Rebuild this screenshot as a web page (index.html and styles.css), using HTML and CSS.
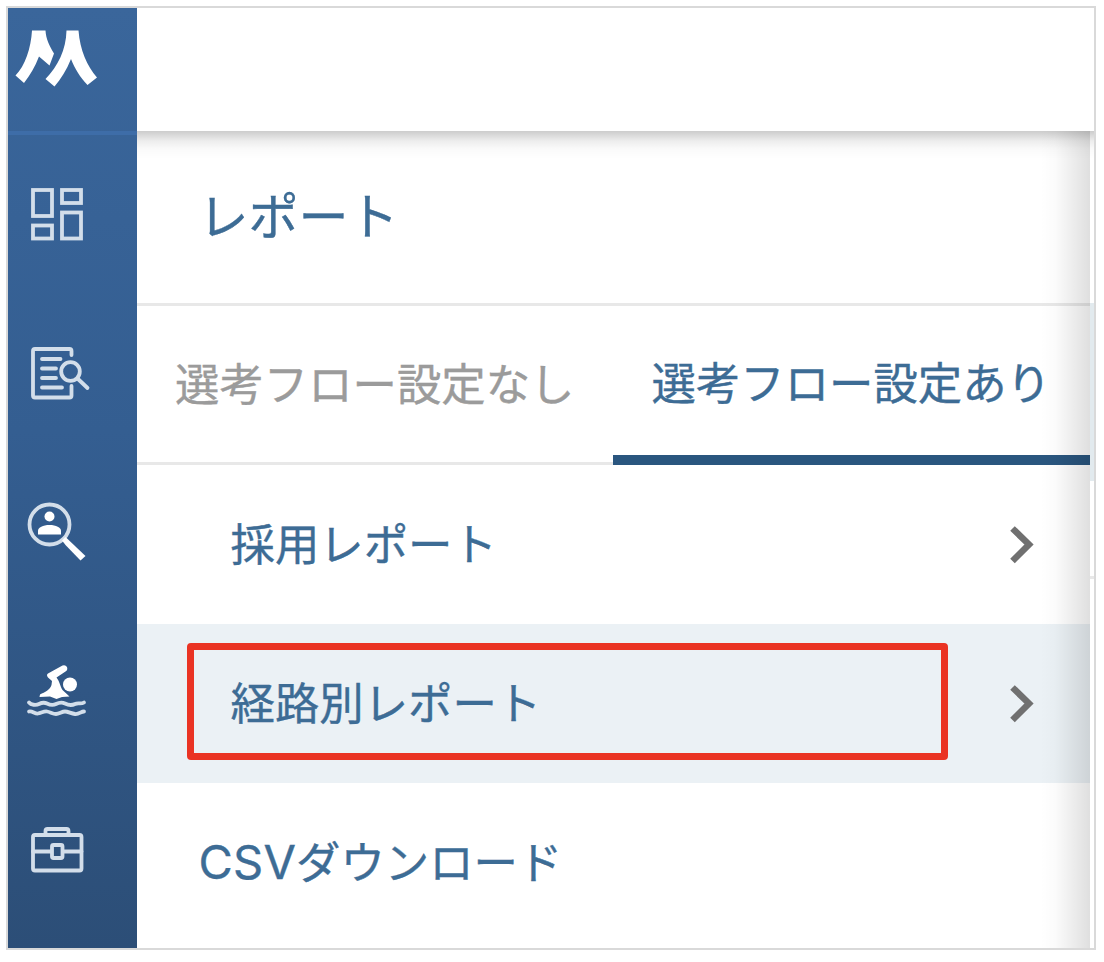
FILE: index.html
```html
<!DOCTYPE html>
<html lang="ja">
<head>
  <meta charset="UTF-8">
  <meta name="viewport" content="width=device-width, initial-scale=1.0">
  <title>レポート</title>
  <link rel="stylesheet" href="styles.css">
</head>
<body>
  <div class="app">
    <nav class="sidebar">
      <a class="logo" href="#">
        <svg width="128" height="124" viewBox="8 8 128 124">
          <path d="M32 30.500H45.500C46 39 49 45 54 53.500L49.500 65.500L39 56.500C35 67 30 75 24 83L15.500 75.500C25 66 31 48 32 30.500z"/>
          <path d="M66.500 30.500H78.500C80 50 87 66 97 77.500L87.500 85C80 77 75 69 71 59C66.500 70 61 79 54.500 86.500L45.500 79C58 66 66 50 66.500 30.500z"/>
        </svg>
      </a>
      <a class="nav-item" href="#">
        <svg width="128" height="159" viewBox="8 135 128 159">
          <g class="line">
            <rect x="33" y="190" width="19" height="26"/>
            <rect x="62" y="190" width="19" height="13"/>
            <rect x="33" y="225.500" width="19" height="13"/>
            <rect x="62" y="212.500" width="19" height="26"/>
          </g>
        </svg>
      </a>
      <a class="nav-item" href="#">
        <svg width="128" height="159" viewBox="8 294 128 159">
          <g class="line">
            <path d="M71.500 355v-4q0-2-2-2H35q-2 0-2 2v44.500q0 2 2 2h34.500q2 0 2-2V386"/>
            <path d="M42 359H60.500M42 368.500H56M42 378H56M42 387.500H62"/>
            <circle cx="70.500" cy="371.500" r="9.300"/>
            <path d="M77.500 378.500l10 9.500"/>
          </g>
        </svg>
      </a>
      <a class="nav-item" href="#">
        <svg width="128" height="159" viewBox="8 453 128 159">
          <g class="line">
            <circle cx="49.500" cy="524.500" r="20"/>
          </g>
          <circle cx="49.500" cy="516.500" r="5"/>
          <path d="M38 534.500v-4c0-3 5-5.500 11.500-5.500s11.500 2.500 11.500 5.500v4z"/>
          <path d="M62 540.500L65.500 537L85.500 556L80.500 560.500L65.500 545z"/>
        </svg>
      </a>
      <a class="nav-item" href="#">
        <svg width="128" height="159" viewBox="8 612 128 159">
          <circle cx="70" cy="684.500" r="7"/>
          <path d="M48 673.500L62.500 665.500q3-1 4.500 1.500 1 3-1.500 4.500L56.500 677.500C60 682 60 686 62.500 690L69.500 696.500L62 697L56.500 699L50 696.500L39.500 697L40 694.500C45 692 50 690 51.500 685L52 681L48 677.500Q46 675 48 673.500z"/>
          <g class="line">
            <path d="M29 702.500c2 2.500 7 3 10 1.500s5-2 8-.500 6 2 9 .5 6-2 9-.5 7 2 10 .5 6 .5 9-1.500"/>
            <path d="M29 711.500c3-1 6 2.500 9 2s6-2.500 9-2 6 2.500 9 2.500 6-2.500 9-2.500 6 2 10 2.500 6-2.500 9-2.500"/>
          </g>
        </svg>
      </a>
      <a class="nav-item" href="#">
        <svg width="128" height="159" viewBox="8 771 128 159">
          <g class="line">
            <rect x="33" y="835" width="48.500" height="35.500" rx="2"/>
            <path d="M45.500 835v-4q0-2 2-2h19q2 0 2 2v4M33 851.500h18M63.500 851.500h18"/>
            <rect x="52" y="845" width="10.500" height="13" rx="1.500"/>
          </g>
        </svg>
      </a>
    </nav>
    <div class="content">
      <header class="topbar"></header>
      <div class="body">
        <main class="panel">
          <h1 class="panel-title">レポート</h1>
          <div class="tabs">
            <a class="tab" href="#">選考フロー設定なし</a>
            <a class="tab active" href="#">選考フロー設定あり</a>
          </div>
          <ul class="menu">
            <li class="menu-item">
              <span>採用レポート</span>
              <svg class="chevron" width="24" height="40" viewBox="0 0 24 40"><path d="M2.500 3.500L19 19.500 2.500 36"/></svg>
            </li>
            <li class="menu-item selected">
              <span>経路別レポート</span>
              <svg class="chevron" width="24" height="40" viewBox="0 0 24 40"><path d="M2.500 3.500L19 19.500 2.500 36"/></svg>
              <div class="highlight"></div>
            </li>
            <li class="menu-item csv"><span><span class="latin">CSV</span>ダウンロード</span></li>
          </ul>
        </main>
        <div class="page-edge">
          <div class="edge-top"></div>
          <div class="edge-tint"></div>
          <div class="edge-row"></div>
        </div>
      </div>
    </div>
  </div>
</body>
</html>
```

FILE: styles.css
```css
:root {
  --navy: #2a567f;
  --text: #3d6c95;
  --muted: #9b9b9b;
  --line: #e8e8e8;
  --selected: #ebf1f5;
  --red: #ea3323;
}
* { box-sizing: border-box; }
body {
  margin: 0;
  padding: 6px;
  background: #fff;
  color: var(--text);
  font-family: Inter, "Noto Sans CJK JP", sans-serif;
  -webkit-text-stroke: 0.4px;
}
a {
  color: inherit;
  text-decoration: none;
}
.app {
  display: flex;
  width: 1090px;
  height: 944px;
  border: 2px solid #d9d9d9;
  overflow: hidden;
}
/* Sidebar */
.sidebar {
  width: 128.5px;
  flex-shrink: 0;
  background: linear-gradient(#3a669b, #345e91 45%, #2c4e77);
}
.sidebar svg {
  display: block;
  fill: #fff;
}
.sidebar .line {
  fill: none;
  stroke: #d3deea;
  stroke-width: 3.8;
  stroke-linecap: round;
}
.logo {
  display: block;
  height: 127px;
  border-bottom: 4px solid #3e6da8;
}
.nav-item {
  display: block;
  height: 159px;
}
/* Content */
.content {
  flex: 1;
  display: flex;
  flex-direction: column;
}
.topbar {
  height: 123px;
  flex-shrink: 0;
}
.body {
  flex: 1;
  display: flex;
  position: relative;
}
.body::before {
  content: "";
  position: absolute;
  inset: 0 0 auto;
  height: 28px;
  background: linear-gradient(rgba(0,0,0,0.20), rgba(0,0,0,0.15) 4px, rgba(0,0,0,0.07) 10px, rgba(0,0,0,0.02) 18px, transparent);
}
.panel {
  width: 953px;
  position: relative;
}
.panel::after {
  content: "";
  position: absolute;
  inset: 0 0 0 auto;
  width: 50px;
  background: linear-gradient(90deg, transparent, rgba(0,0,0,0.015) 30%, rgba(0,0,0,0.07) 65%, rgba(0,0,0,0.125));
  pointer-events: none;
}
.panel-title {
  display: flex;
  align-items: center;
  height: 175px;
  margin: 0;
  padding: 0 0 8px 62px;
  border-bottom: 3px solid var(--line);
  font-size: 50px;
  font-weight: 400;
}
.tabs {
  display: flex;
  height: 159px;
}
.tab {
  flex: 1;
  display: flex;
  align-items: center;
  justify-content: center;
  padding-bottom: 6px;
  border-bottom: 3px solid var(--line);
  color: var(--muted);
  font-size: 44.4px;
  white-space: nowrap;
}
.tab.active {
  padding-bottom: 0;
  border-bottom: 10px solid var(--navy);
  color: var(--text);
}
.menu {
  margin: 0;
  padding: 0;
  list-style: none;
}
.menu-item {
  position: relative;
  display: flex;
  align-items: center;
  justify-content: space-between;
  height: 159px;
  padding: 0 56px 0 94px;
  font-size: 44.4px;
}
.menu-item > span { padding-bottom: 7px; }
.menu-item.selected { background: var(--selected); }
.menu-item.csv { padding-left: 62px; }
.latin {
  font-size: 47px;
  letter-spacing: 0.2px;
}
.chevron {
  fill: none;
  stroke: #707070;
  stroke-width: 6.5;
}
.highlight {
  position: absolute;
  left: 50px;
  top: 18.5px;
  width: 761px;
  height: 117px;
  border: 7px solid var(--red);
  border-radius: 4px;
}
/* Page showing behind the panel */
.page-edge { flex: 1; }
.edge-top { height: 172px; }
.edge-tint {
  height: 178px;
  background: #e2eaee;
}
.edge-row {
  height: 98px;
  border-bottom: 3px solid var(--line);
}
```
